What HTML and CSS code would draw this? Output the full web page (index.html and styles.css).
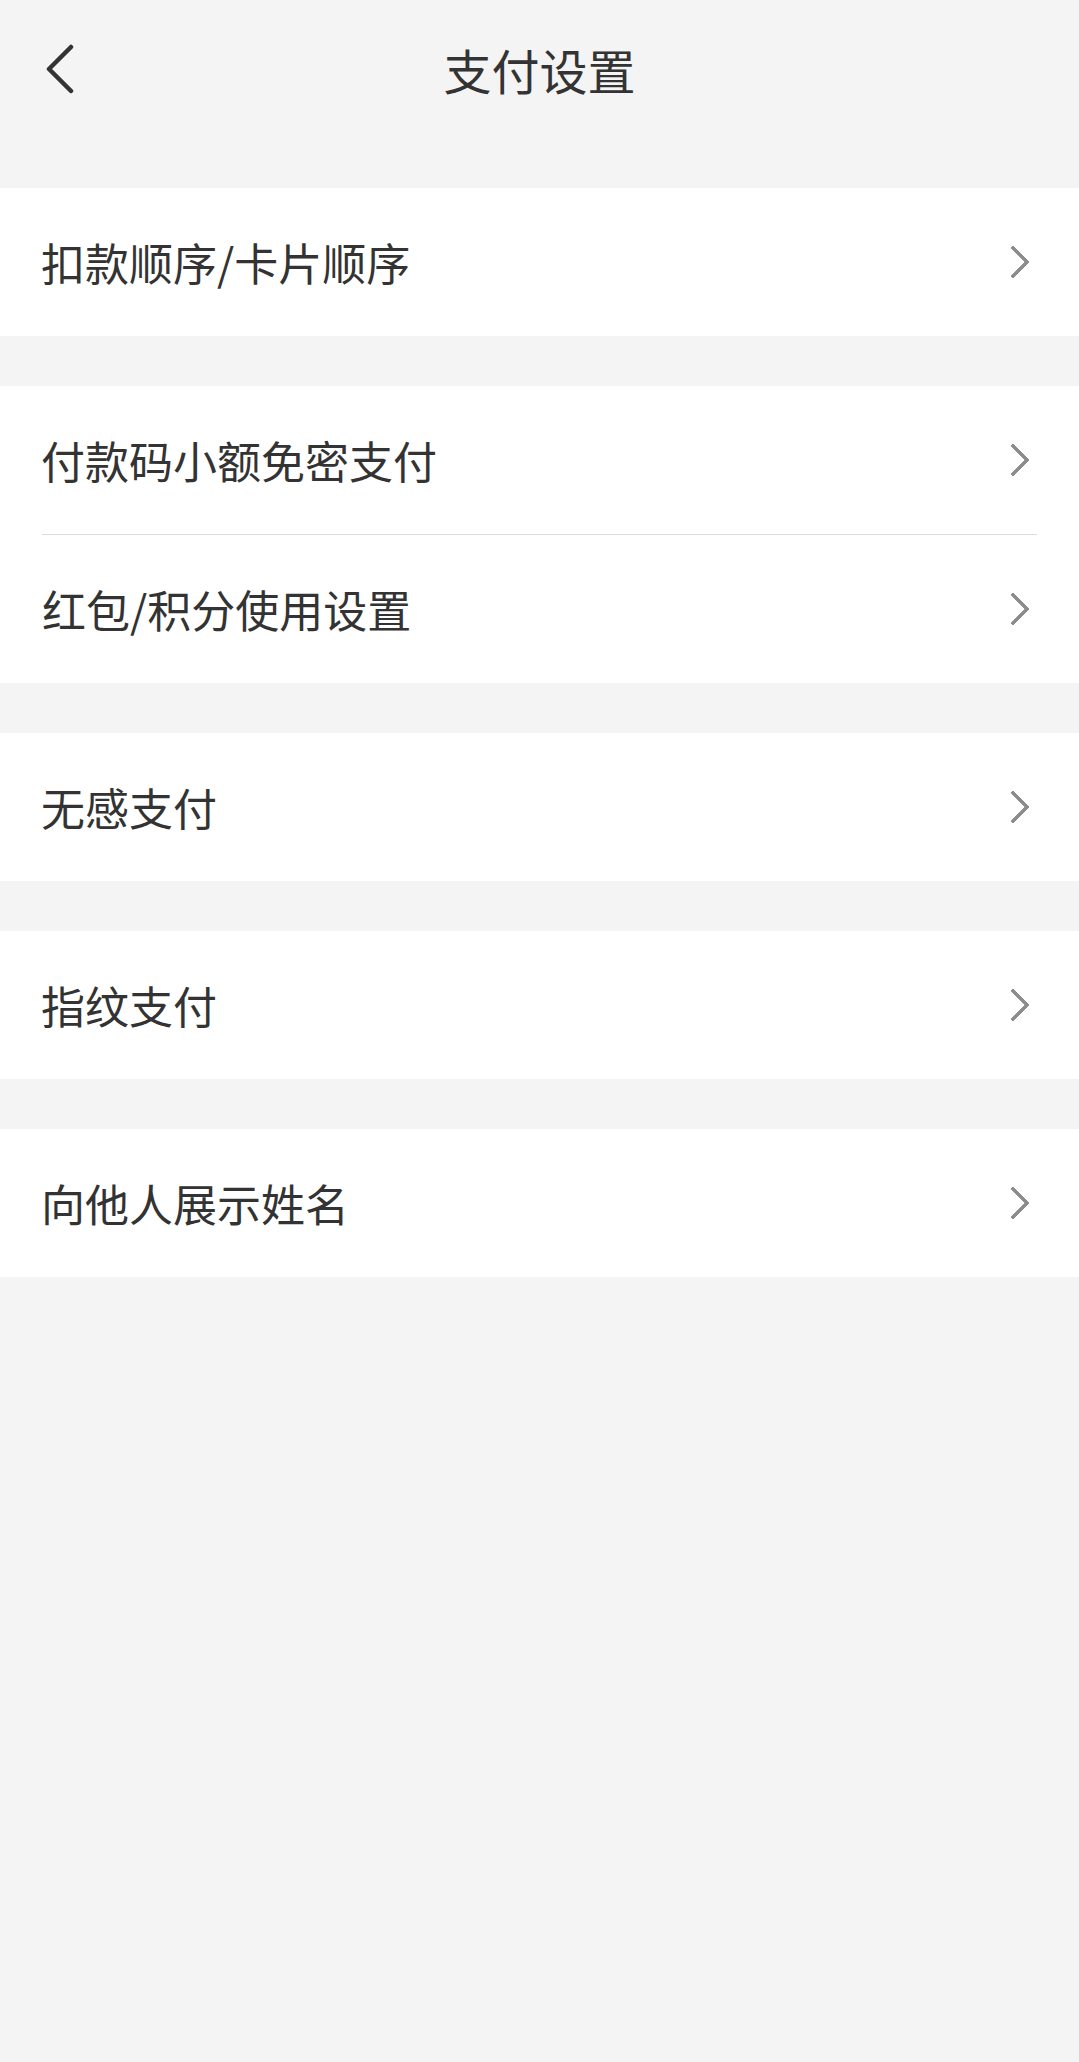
FILE: index.html
```html
<!DOCTYPE html>
<html lang="zh-CN">
<head>
    <meta charset="UTF-8">
    <meta name="viewport" content="width=device-width, initial-scale=1.0">
    <title>支付设置</title>
    <link rel="stylesheet" href="styles.css">
</head>
<body>
    <div class="nav">
        <svg class="back" width="30" height="50" viewBox="0 0 30 50">
            <polyline points="26,3 4,25 26,47" fill="none" stroke="#333" stroke-width="4.5" stroke-linecap="round" stroke-linejoin="round"/>
        </svg>
        <h1>支付设置</h1>
    </div>

    <div class="group">
        <div class="row"><span>扣款顺序/卡片顺序</span><i class="arrow"></i></div>
    </div>

    <div class="group">
        <div class="row"><span>付款码小额免密支付</span><i class="arrow"></i></div>
        <div class="row"><span>红包/积分使用设置</span><i class="arrow"></i></div>
    </div>

    <div class="group">
        <div class="row"><span>无感支付</span><i class="arrow"></i></div>
    </div>

    <div class="group">
        <div class="row"><span>指纹支付</span><i class="arrow"></i></div>
    </div>

    <div class="group">
        <div class="row"><span>向他人展示姓名</span><i class="arrow"></i></div>
    </div>
</body>
</html>
```

FILE: styles.css
```css
body {
    font-family: "Noto Sans CJK SC", "Noto Sans", sans-serif;
    background-color: #f4f4f4;
    color: #333;
    margin: 0;
    padding: 0;
    min-height: 2062px;
}
.nav {
    height: 138px;
    display: flex;
    align-items: center;
    justify-content: center;
    position: relative;
}
.nav h1 {
    margin: 0;
    font-size: 48px;
    font-weight: normal;
    line-height: 1;
}
.back {
    position: absolute;
    left: 45px;
    top: 44px;
}
.group {
    background-color: #fff;
    margin-top: 50px;
}
.row {
    height: 148px;
    display: flex;
    align-items: center;
    justify-content: space-between;
    padding: 0 42px 0 41px;
    font-size: 44px;
}
.row + .row {
    border-top: 1px solid #dcdcdc;
    margin: 0 42px;
    padding: 0;
}
.row span {
    line-height: 1;
}
.arrow {
    width: 20px;
    height: 20px;
    border-top: 4px solid #8c8c8c;
    border-right: 4px solid #8c8c8c;
    border-radius: 2px;
    transform: rotate(45deg);
    margin-right: 12px;
}
```
